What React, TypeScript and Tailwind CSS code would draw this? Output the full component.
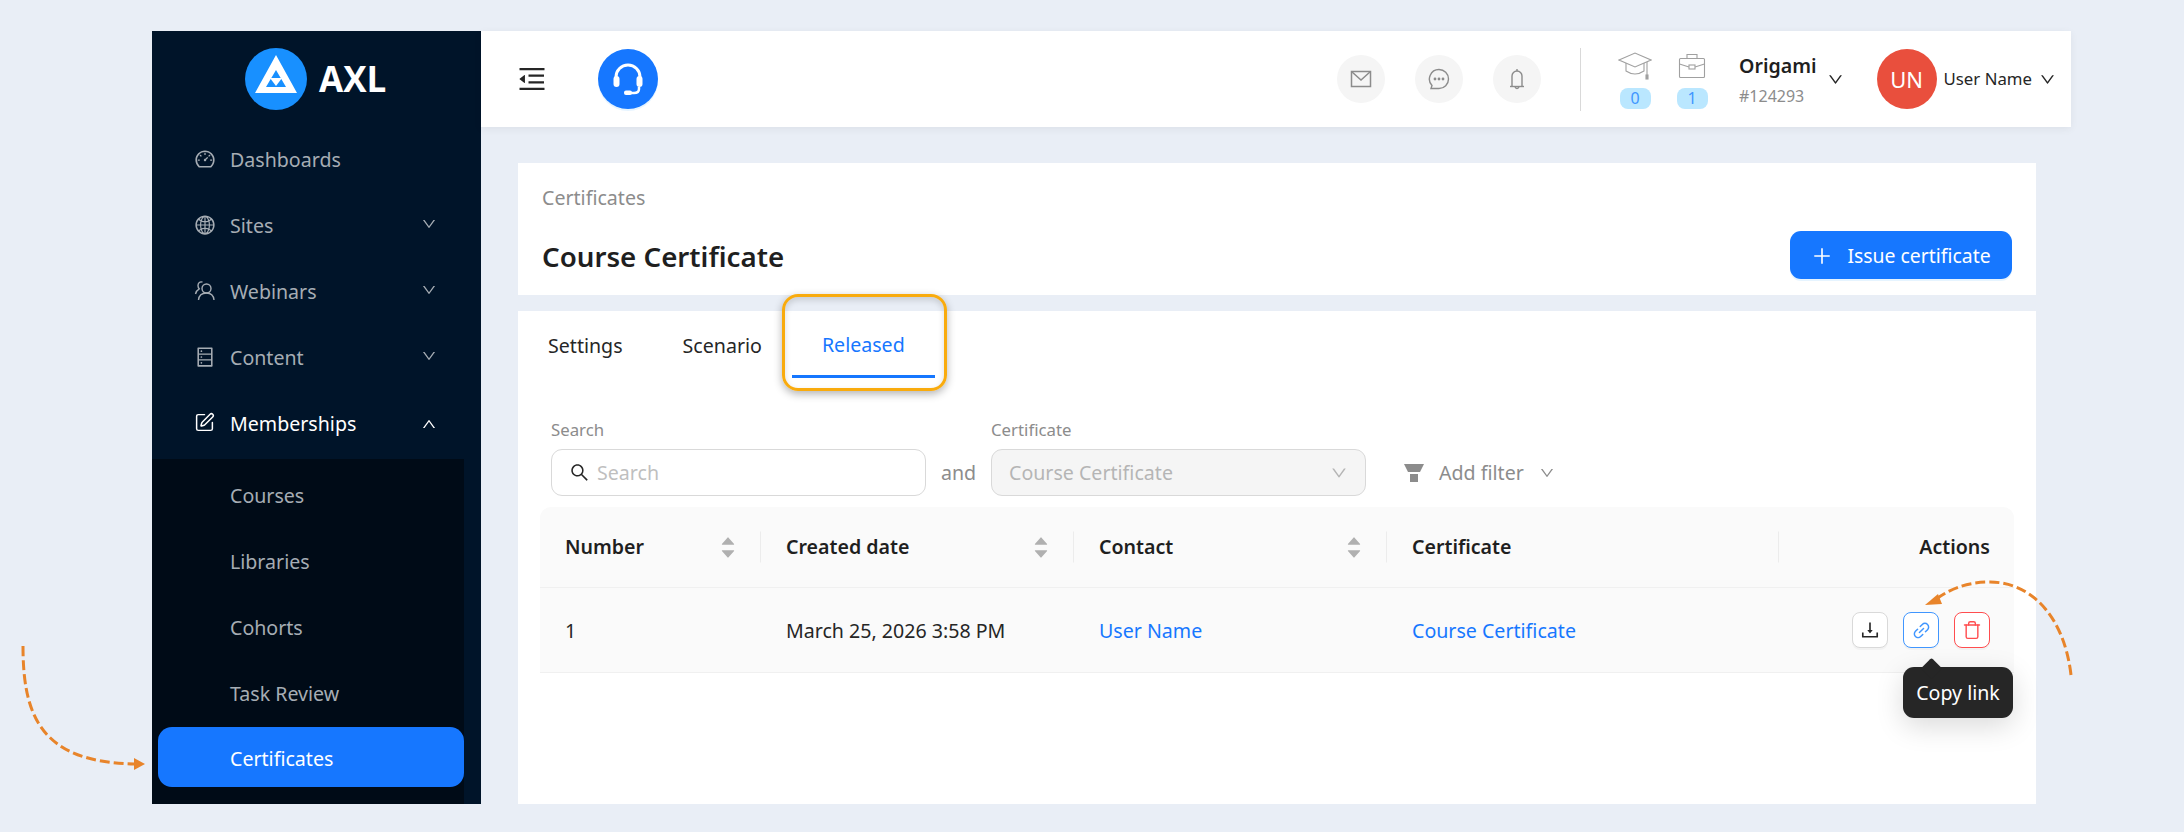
import React from "react";
import {
  AiOutlineDashboard,
  AiOutlineGlobal,
  AiOutlineDown,
  AiOutlineUp,
  AiOutlineDatabase,
  AiOutlinePlus,
  AiOutlineSearch,
  AiOutlineDownload,
  AiOutlineLink,
  AiFillCaretUp,
  AiFillCaretDown,
  AiOutlineMenuFold,
} from "react-icons/ai";
import { SquarePen, Trash } from "lucide-react";

const Logo = () => (
  <svg width="62" height="62" viewBox="0 0 62 62">
    <circle cx="31" cy="31" r="31" fill="#1890ff" />
    <path d="M31 7 L52 45 L10 45 Z M31 22 L21 39 L41 39 Z" fill="#fff" fillRule="evenodd" />
    <path d="M25 30 H37 L31 38 Z" fill="#fff" />
    <path d="M28 30 L31 25 L34 30 Z" fill="#1890ff" />
  </svg>
);

const Headset = () => (
  <svg width="36" height="36" viewBox="0 0 36 36" fill="none">
    <path d="M6 20 V16 A12 12 0 0 1 30 16 V20" stroke="#fff" strokeWidth="3" />
    <rect x="3.5" y="15" width="6" height="11" rx="3" fill="#fff" />
    <rect x="26.5" y="15" width="6" height="11" rx="3" fill="#fff" />
    <path d="M29 26 V28 Q29 32 24 32 H20" stroke="#fff" strokeWidth="2.5" />
    <rect x="14" y="29.5" width="8" height="4.5" rx="2" fill="#fff" />
  </svg>
);

const WebinarIcon = () => (
  <svg width="22" height="22" viewBox="0 0 22 22" fill="none" stroke="#a6adb4" strokeWidth="1.4">
    <circle cx="12.5" cy="8.5" r="4.5" />
    <path d="M4.5 20 C5 15 8.5 13 12.5 13 C16.5 13 19.5 15.5 20 20" />
    <path d="M8.5 2.2 C6 1.2 4 3 4 5.5 C4 7 4.5 8 5.2 8.8 C3.5 9.8 2 11.5 1.5 14" />
  </svg>
);

const MailIcon = () => (
  <svg width="22" height="22" viewBox="0 0 22 22" fill="none" stroke="#8c8c8c" strokeWidth="1.5">
    <rect x="1.5" y="3.5" width="19" height="15" />
    <path d="M1.5 3.5 L11 12 L20.5 3.5" />
  </svg>
);

const ChatIcon = () => (
  <svg width="24" height="24" viewBox="0 0 24 24" fill="none" stroke="#8c8c8c" strokeWidth="1.4">
    <path d="M12 2.5 A9.5 9.5 0 1 1 12 21.5 H4 L5 18.5 A9.5 9.5 0 0 1 12 2.5 Z" />
    <circle cx="8" cy="12" r="0.7" fill="#8c8c8c" />
    <circle cx="12" cy="12" r="0.7" fill="#8c8c8c" />
    <circle cx="16" cy="12" r="0.7" fill="#8c8c8c" />
  </svg>
);

const BellIcon = () => (
  <svg width="22" height="24" viewBox="0 0 22 24" fill="none" stroke="#8c8c8c" strokeWidth="1.4">
    <path d="M6 19 V9 A5 5 0 0 1 16 9 V19" />
    <path d="M4 19.5 H18" />
    <path d="M11 2 V4" />
    <path d="M9 20 Q11 23 13 20" />
  </svg>
);

const CapIcon = () => (
  <svg width="34" height="30" viewBox="0 0 34 30" fill="none" stroke="#a0a0a0" strokeWidth="1.1">
    <path d="M1 9 L17 2 L33 9 L17 16 Z" />
    <path d="M8 12 V20 Q17 26 26 20 V12" />
    <path d="M29 11 V24" />
    <rect x="28" y="24" width="2" height="4" fill="#a0a0a0" />
  </svg>
);

const CaseIcon = () => (
  <svg width="28" height="28" viewBox="0 0 28 28" fill="none" stroke="#a0a0a0" strokeWidth="1.1">
    <rect x="1.5" y="6.5" width="25" height="19" rx="1" />
    <path d="M9 6.5 V2.5 H19 V6.5" />
    <path d="M1.5 12 L11 15 M26.5 12 L17 15" />
    <rect x="11" y="13" width="6" height="4" />
  </svg>
);

const Funnel = () => (
  <svg width="20" height="18" viewBox="0 0 20 18" fill="#8c8c8c">
    <path d="M0 0 H20 L16 8 H4 Z" />
    <rect x="6" y="10" width="8" height="8" />
  </svg>
);

const Sorter = () => (
  <span className="flex flex-col items-center text-[#b0b0b0] text-[18px]">
    <AiFillCaretUp />
    <AiFillCaretDown className="-mt-[5px]" />
  </span>
);

const menu = [
  { label: "Dashboards", icon: <AiOutlineDashboard size={22} /> },
  { label: "Sites", icon: <AiOutlineGlobal size={22} />, caret: true },
  { label: "Webinars", icon: <WebinarIcon />, caret: true },
  { label: "Content", icon: <AiOutlineDatabase size={22} />, caret: true },
];

const Sidebar = () => (
  <aside className="w-[329px] shrink-0 bg-[#001429] flex flex-col">
    <div className="h-[96px] flex items-center pl-[93px] gap-[12px] shrink-0">
      <Logo />
      <span className="text-white text-[35px] font-bold font-['Open_Sans',sans-serif]">AXL</span>
    </div>
    {menu.map((m) => (
      <div key={m.label} className="h-[66px] shrink-0 flex items-center pl-[42px] pr-[44px] text-[#a6adb4]">
        <span className="w-[36px] flex items-center -mt-[3px]">{m.icon}</span>
        <span className="text-[19.6px] flex-1">{m.label}</span>
        {m.caret && <AiOutlineDown size={16} className="-mt-[4px]" />}
      </div>
    ))}
    <div className="h-[66px] shrink-0 flex items-center pl-[42px] pr-[44px] text-white">
      <span className="w-[36px] flex items-center -mt-[3px]"><SquarePen size={21} strokeWidth={1.7} /></span>
      <span className="text-[19.6px] flex-1">Memberships</span>
      <AiOutlineUp size={16} />
    </div>
    <div className="flex-1 mt-[2px] mr-[17px] bg-[#000b17] pt-[7px] pl-[6px] flex flex-col gap-[6px]">
      {["Courses", "Libraries", "Cohorts", "Task Review"].map((s) => (
        <div key={s} className="h-[60px] shrink-0 flex items-center pl-[72px] text-[19.6px] text-[#a6adb4]">{s}</div>
      ))}
      <div className="h-[60px] shrink-0 -mt-[3px] pt-[3px] flex items-center pl-[72px] text-[19.6px] text-white bg-[#1677ff] rounded-[14px]">Certificates</div>
    </div>
  </aside>
);

const RoundIcon = ({ children }: { children: React.ReactNode }) => (
  <span className="w-[48px] h-[48px] rounded-full bg-[#f5f5f5] flex items-center justify-center">{children}</span>
);

const Counter = ({ icon, n }: { icon: React.ReactNode; n: string }) => (
  <div className="w-[34px] flex flex-col items-center">
    <span className="h-[32px] flex items-center">{icon}</span>
    <span className="mt-[6px] w-[31px] h-[21px] rounded-[8px] bg-[#bae7ff] text-[#4096ff] text-[16px] leading-[21px] text-center">{n}</span>
  </div>
);

const Header = () => (
  <header className="h-[96px] shrink-0 bg-white shadow-[0_2px_8px_rgba(0,0,0,0.06)] flex items-center pl-[35px] relative z-10">
    <AiOutlineMenuFold size={32} color="#262626" />
    <span className="ml-[50px] w-[60px] h-[60px] shrink-0 rounded-full bg-[#1677ff] flex items-center justify-center shadow-[0_2px_0_rgba(5,145,255,0.1)]">
      <Headset />
    </span>
    <div className="ml-[679px] flex gap-[30px]">
      <RoundIcon><MailIcon /></RoundIcon>
      <RoundIcon><ChatIcon /></RoundIcon>
      <RoundIcon><BellIcon /></RoundIcon>
    </div>
    <span className="ml-[39px] w-px h-[63px] bg-[#d9d9d9]" />
    <div className="ml-[37px] flex gap-[23px]">
      <Counter icon={<CapIcon />} n="0" />
      <Counter icon={<CaseIcon />} n="1" />
    </div>
    <div className="ml-[30px] flex flex-col whitespace-nowrap">
      <span className="text-[19.6px] leading-[30px] font-semibold text-[#1f1f1f]">Origami</span>
      <span className="text-[16px] leading-[24px] mt-[3px] text-[#8c8c8c]">#124293</span>
    </div>
    <AiOutlineDown size={17} className="ml-[10px] text-[#262626] shrink-0" />
    <span className="ml-[33px] w-[60px] h-[60px] shrink-0 rounded-full bg-[#e94f3d] text-white text-[22px] flex items-center justify-center">UN</span>
    <span className="ml-[7px] text-[16.8px] text-[#262626] whitespace-nowrap">User Name</span>
    <AiOutlineDown size={17} className="ml-[7px] text-[#262626] shrink-0" />
  </header>
);

const cols = "grid grid-cols-[221px_313px_313px_392px_235px]";

const HeadCell = ({ label, sort, sep = true }: { label: string; sort?: boolean; sep?: boolean }) => (
  <div className="relative flex items-center justify-between pl-[25px] pr-[24px] text-[19.6px] font-semibold text-[#1f1f1f]">
    <span>{label}</span>
    {sort && <Sorter />}
    {sep && <span className="absolute right-0 top-1/2 -translate-y-1/2 w-px h-[31px] bg-[#ececec]" />}
  </div>
);

const ActionBtn = ({ cls, children }: { cls: string; children: React.ReactNode }) => (
  <span className={`w-[36px] h-[36px] rounded-[8px] border flex items-center justify-center shadow-[0_2px_0_rgba(0,0,0,0.03)] ${cls}`}>{children}</span>
);

const Main = () => (
  <main className="flex-1 flex flex-col gap-[16px] pt-[36px] pl-[37px] pr-[35px] min-h-0">
    <section className="h-[132px] shrink-0 bg-white pl-[24px] pr-[24px] pt-[21px] relative">
      <div className="text-[19.6px] leading-[28px] text-[#8c8c8c]">Certificates</div>
      <div className="flex items-center justify-between mt-[21px]">
        <h1 className="text-[27.7px] leading-[40px] font-semibold text-[#1f1f1f]">Course Certificate</h1>
        <button className="h-[48px] w-[222px] mt-[-2px] pt-[1px] rounded-[11px] bg-[#1677ff] text-white text-[19.4px] flex items-center justify-center gap-[14px] shadow-[0_2px_0_rgba(5,145,255,0.1)]">
          <AiOutlinePlus size={22} />
          Issue certificate
        </button>
      </div>
    </section>
    <section className="flex-1 bg-white">
      <div className="flex h-[67px] text-[19.6px] text-[#262626]">
        <div className="px-[30px] flex items-center pt-[3px]">Settings</div>
        <div className="px-[30px] flex items-center pt-[3px]">Scenario</div>
        <div className="px-[30px] flex items-center pt-[3px] text-[#1677ff] border-b-[3px] border-[#1677ff]">Released</div>
      </div>
      <div className="mt-[40px] ml-[33px] flex items-end">
        <div className="w-[375px]">
          <div className="text-[16.8px] leading-[24px] mb-[7px] text-[#8c8c8c]">Search</div>
          <div className="h-[47px] rounded-[11px] border border-[#d9d9d9] flex items-center pl-[17px] gap-[7px] text-[19.6px] text-[#bfbfbf]">
            <AiOutlineSearch size={21} color="#262626" />
            Search
          </div>
        </div>
        <span className="ml-[15px] w-[50px] h-[47px] flex items-center text-[19.6px] text-[#8c8c8c]">and</span>
        <div className="w-[375px]">
          <div className="text-[16.8px] leading-[24px] mb-[7px] text-[#8c8c8c]">Certificate</div>
          <div className="h-[47px] rounded-[11px] border border-[#d9d9d9] bg-[#f5f5f5] flex items-center justify-between pl-[17px] pr-[17px] text-[19.6px] text-[#b5b5b5]">
            Course Certificate
            <AiOutlineDown size={18} />
          </div>
        </div>
        <div className="ml-[38px] h-[47px] flex items-center gap-[15px] text-[19.6px] text-[#8c8c8c]">
          <Funnel />
          <span>Add filter</span>
          <AiOutlineDown size={16} />
        </div>
      </div>
      <div className="mt-[11px] mx-[22px]">
        <div className={`${cols} h-[81px] bg-[#fafafa] rounded-t-[11px] border-b border-[#f0f0f0]`}>
          <HeadCell label="Number" sort />
          <HeadCell label="Created date" sort />
          <HeadCell label="Contact" sort />
          <HeadCell label="Certificate" />
          <div className="flex items-center justify-end pr-[24px] text-[19.6px] font-semibold text-[#1f1f1f]">Actions</div>
        </div>
        <div className={`${cols} h-[85px] bg-[#fafafa] border-b border-[#f0f0f0] text-[19.6px] items-center`}>
          <div className="pl-[25px] pt-[1px] text-[#262626]">1</div>
          <div className="pl-[25px] pt-[1px] text-[#262626]">March 25, 2026 3:58 PM</div>
          <div className="pl-[25px] pt-[1px] text-[#1677ff]">User Name</div>
          <div className="pl-[25px] pt-[1px] text-[#1677ff]">Course Certificate</div>
          <div className="flex justify-end gap-[15px] pr-[24px]">
            <ActionBtn cls="bg-white border-[#d9d9d9] text-[#262626]"><AiOutlineDownload size={22} /></ActionBtn>
            <ActionBtn cls="bg-white border-[#4096ff] text-[#4096ff]"><AiOutlineLink size={21} /></ActionBtn>
            <ActionBtn cls="bg-white border-[#ff4d4f] text-[#ff4d4f]"><Trash size={20} strokeWidth={1.7} /></ActionBtn>
          </div>
        </div>
      </div>
    </section>
  </main>
);

export default function App() {
  return (
    <div className="relative w-[2184px] h-[832px] bg-[#e9eef6] overflow-hidden pt-[31px] pl-[152px] font-['Noto_Sans','Open_Sans',sans-serif]">
      <div className="w-[1919px] h-[773px] flex">
        <Sidebar />
        <div className="flex-1 flex flex-col min-w-0">
          <Header />
          <Main />
        </div>
      </div>

      {/* highlight round the active tab */}
      <div className="absolute left-[782px] top-[294px] w-[165px] h-[97px] rounded-[16px] border-[3px] border-[#f9ab0d] shadow-[0_3px_8px_rgba(0,0,0,0.3),inset_0_3px_6px_rgba(0,0,0,0.15)]" />

      {/* tooltip */}
      <div className="absolute left-[1903px] top-[667px] w-[110px] h-[51px] rounded-[11px] bg-[#262626] text-white text-[19.6px] flex items-center justify-center shadow-[0_8px_28px_rgba(0,0,0,0.15)]">
        Copy link
        <span className="absolute left-[21px] top-[-6px] w-[15px] h-[15px] rotate-45 rounded-[2px] bg-[#262626]" />
      </div>

      {/* annotation arrows */}
      <svg className="absolute left-0 top-0 pointer-events-none" width="2184" height="832" fill="none">
        <path d="M23 646 C23 715 40 762 134 764" stroke="#e8842a" strokeWidth="3" strokeDasharray="10 4" />
        <path d="M134 758 L145 764 L134 770 Z" fill="#e8842a" />
        <path d="M2071 675 C2064 615 2030 582 1990 582 C1966 582 1948 590 1935 600" stroke="#e8842a" strokeWidth="3" strokeDasharray="10 4" />
        <path d="M1925 605 L1938 594 L1942 604 Z" fill="#e8842a" />
      </svg>
    </div>
  );
}
